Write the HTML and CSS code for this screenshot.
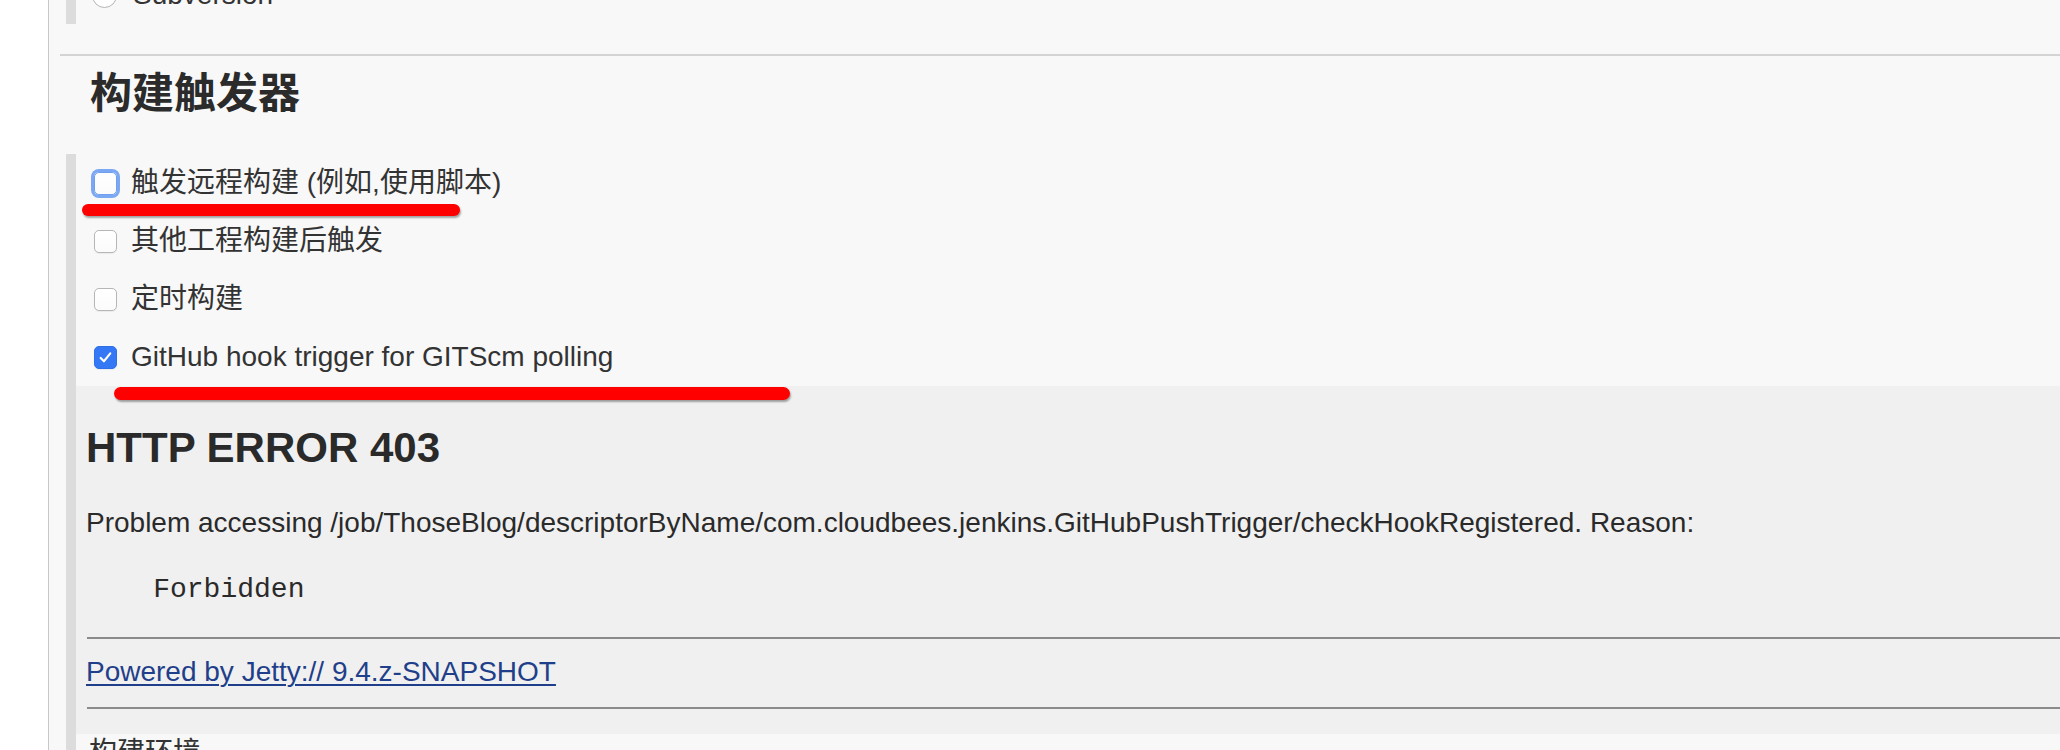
FILE: index.html
```html
<!DOCTYPE html>
<html lang="zh-CN">
<head>
<meta charset="utf-8">
<title>构建触发器</title>
<link rel="stylesheet" href="styles.css">
</head>
<body>
<div class="page">
  <div class="gutter"></div>
  <main class="main">
    <div class="prev-section">
      <div class="row row-cut">
        <span class="radio"></span>
        <span class="label">Subversion</span>
      </div>
    </div>
    <div class="separator"></div>
    <h2 class="section-title">构建触发器</h2>
    <div class="section">
      <div class="row">
        <span class="checkbox checkbox-focus"></span>
        <span class="label">触发远程构建 (例如,使用脚本)</span>
      </div>
      <div class="row">
        <span class="checkbox"></span>
        <span class="label">其他工程构建后触发</span>
      </div>
      <div class="row">
        <span class="checkbox"></span>
        <span class="label">定时构建</span>
      </div>
      <div class="row">
        <span class="checkbox checkbox-checked">
          <svg class="check" viewBox="0 0 24 24" width="23" height="23"><path d="M6.5 12.5 L10.2 16.3 L17.5 7.2" fill="none" stroke="#ffffff" stroke-width="2.4" stroke-linecap="round" stroke-linejoin="round"/></svg>
        </span>
        <span class="label">GitHub hook trigger for GITScm polling</span>
      </div>
      <div class="error-frame">
        <h2 class="err-title">HTTP ERROR 403</h2>
        <p class="err-text">Problem accessing /job/ThoseBlog/descriptorByName/com.cloudbees.jenkins.GitHubPushTrigger/checkHookRegistered. Reason:</p>
        <pre class="err-pre">    Forbidden</pre>
        <hr class="err-rule">
        <p class="err-text err-link-line"><a class="err-link" href="#">Powered by Jetty:// 9.4.z-SNAPSHOT</a></p>
        <hr class="err-rule">
      </div>
      <div class="tail">构建环境</div>
    </div>
  </main>
  <div class="mark mark-1"></div>
  <div class="mark mark-2"></div>
</div>
</body>
</html>
```

FILE: styles.css
```css
html, body {
  margin: 0;
  padding: 0;
  background: #ffffff;
}

body {
  font-family: "Liberation Sans", "Noto Sans CJK SC", sans-serif;
  color: #333333;
  overflow: hidden;
}

.page {
  position: relative;
  display: flex;
  width: 2060px;
  height: 750px;
  overflow: hidden;
}

.gutter {
  width: 48px;
  flex: none;
  background: #ffffff;
}

.main {
  flex: 1;
  background: #f8f8f8;
  border-left: 1px solid #c8c8c8;
  min-width: 0;
}

.prev-section {
  display: flow-root;
  margin-left: 17px;
  border-left: 10px solid #dcdcdc;
  height: 24px;
}

.row {
  display: flex;
  align-items: center;
  height: 58px;
  padding-left: 18px;
}

.row-cut {
  margin-top: -34px;
  padding-left: 16px;
}

.label {
  font-size: 28px;
  line-height: 58px;
  white-space: nowrap;
  margin-left: 14px;
  color: #333333;
}

.radio {
  width: 25px;
  height: 25px;
  border-radius: 50%;
  border: 1px solid #b4b4b4;
  background: #ffffff;
  box-sizing: border-box;
  flex: none;
}

.row-cut .label {
  margin-left: 16px;
}

.separator {
  margin-top: 30px;
  margin-left: 11px;
  height: 2px;
  background: #d3d3d3;
}

.section-title {
  margin: 13px 0 35px;
  padding-left: 41px;
  font-size: 42px;
  line-height: 50px;
  font-weight: 700;
  color: #2b2b2b;
}

.section {
  margin-left: 17px;
  border-left: 10px solid #dcdcdc;
}

.checkbox {
  width: 23px;
  height: 23px;
  box-sizing: border-box;
  border: 1px solid #b6b6b6;
  border-radius: 5px;
  background: linear-gradient(#ffffff, #fbfbfb);
  box-shadow: 0 1px 1px rgba(0, 0, 0, 0.06);
  flex: none;
  display: flex;
  align-items: center;
  justify-content: center;
}

.checkbox-focus {
  border-color: #6f9fee;
  box-shadow: 0 0 0 3px #7ba8f2;
}

.checkbox-checked {
  background: #3478f6;
  border-color: #2f6fe8;
}

.check {
  display: block;
}

.error-frame {
  background: #f0f0f0;
  padding: 37px 0 25px 10px;
  color: #2a2a2a;
}

.err-title {
  margin: 0;
  font-size: 42px;
  line-height: 50px;
  font-weight: 700;
  white-space: nowrap;
}

.err-text {
  margin: 33px 0 0;
  font-size: 28px;
  line-height: 34px;
  white-space: nowrap;
}

.err-pre {
  margin: 33px 0 0;
  font-family: "Liberation Mono", monospace;
  font-size: 28px;
  line-height: 34px;
}

.err-rule {
  margin: 30px 0 0 1px;
  height: 0;
  border: 0;
  border-top: 2px solid #8b8b8b;
}

.err-link-line {
  margin-top: 16px;
}

.err-link-line + .err-rule {
  margin-top: 18px;
}

.err-link {
  color: #1f3f8a;
  text-decoration: underline;
  text-decoration-thickness: 2px;
  text-underline-offset: 3px;
}

.tail {
  padding: 2px 0 0 13px;
  font-size: 28px;
  line-height: 34px;
  white-space: nowrap;
}

.mark {
  position: absolute;
  background: #ff0000;
  border-radius: 7px;
  box-shadow: 1px 2px 2px rgba(0, 0, 0, 0.35);
}

.mark-1 {
  left: 82px;
  top: 204px;
  width: 378px;
  height: 12px;
}

.mark-2 {
  left: 114px;
  top: 387px;
  width: 676px;
  height: 13px;
}
```
